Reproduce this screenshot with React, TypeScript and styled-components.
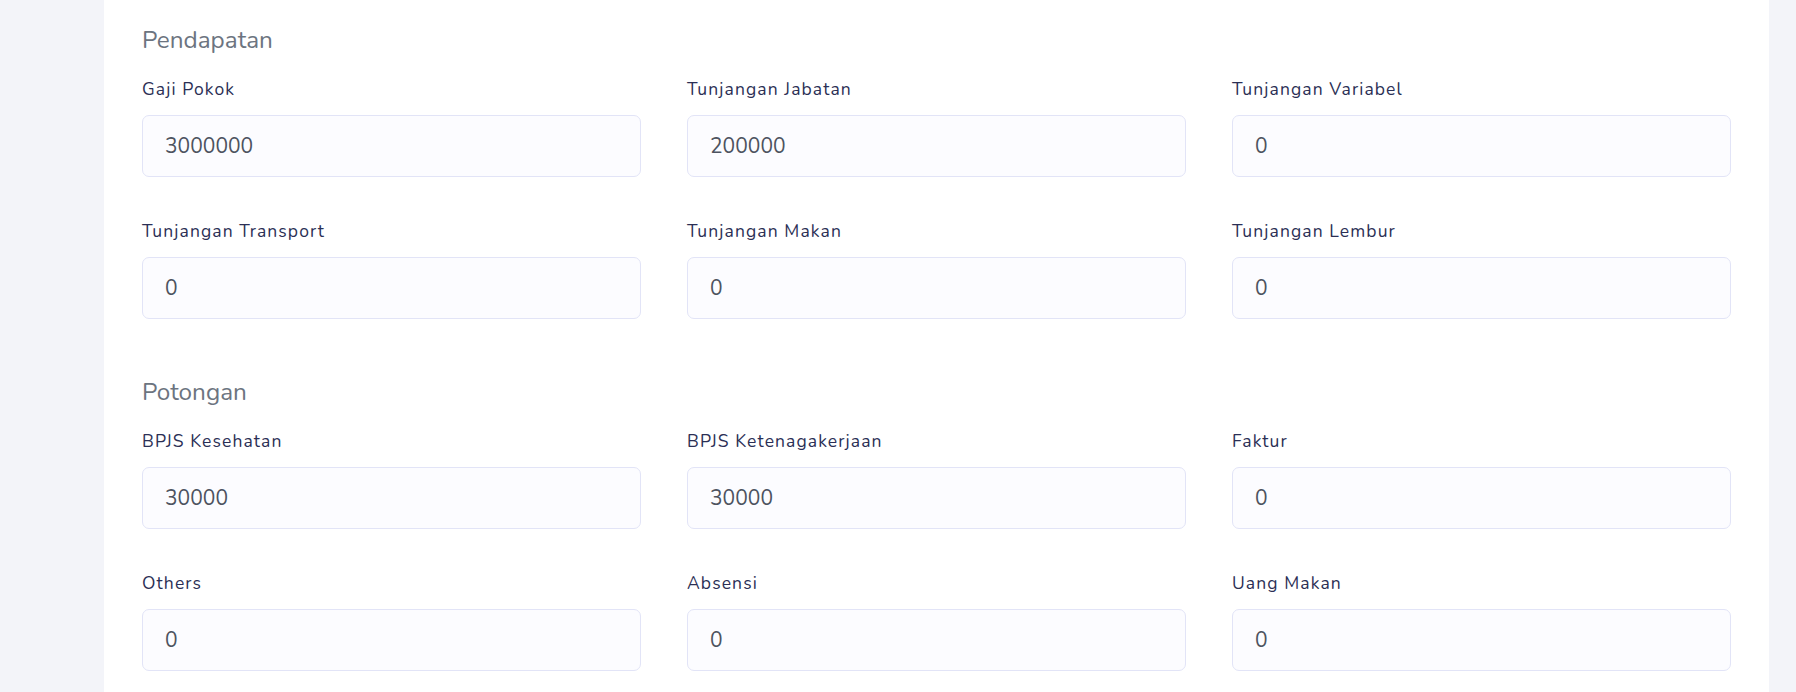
import React from "react";
import styled, { createGlobalStyle } from "styled-components";

const GlobalStyle = createGlobalStyle`
  html, body {
    margin: 0;
    padding: 0;
    background: #f3f4f9;
    font-family: "Nunito", "Open Sans", "Noto Sans", sans-serif;
  }
  * { box-sizing: border-box; }
`;

const Page = styled.div`
  display: flex;
  min-height: 692px;
  padding: 0 27px 0 104px;
  background: #f3f4f9;
`;

const Card = styled.main`
  flex: 1;
  background: #ffffff;
  padding: 26px 38px 40px 38px;
  display: flex;
  flex-direction: column;
  gap: 59px;
`;

const Section = styled.section`
  display: flex;
  flex-direction: column;
  gap: 22px;
`;

const Heading = styled.h5`
  margin: 0;
  font-size: 24.3px;
  line-height: 29px;
  font-weight: 400;
  color: #6c7480;
`;

const Grid = styled.div`
  display: grid;
  grid-template-columns: repeat(3, 1fr);
  column-gap: 46px;
  row-gap: 42px;
`;

const Field = styled.div`
  display: flex;
  flex-direction: column;
  gap: 14px;
`;

const Label = styled.label`
  font-size: 17.5px;
  line-height: 24px;
  letter-spacing: 1.1px;
  color: #2b2f55;
  font-weight: 400;
`;

const Input = styled.input`
  height: 62px;
  width: 100%;
  padding: 0 22px;
  border: 1px solid #e2e4f7;
  border-radius: 7px;
  background: #fcfcff;
  font-family: inherit;
  font-size: 21px;
  color: #4d5360;
  outline: none;
`;

type FieldDef = { label: string; value: string };

const pendapatan: FieldDef[] = [
  { label: "Gaji Pokok", value: "3000000" },
  { label: "Tunjangan Jabatan", value: "200000" },
  { label: "Tunjangan Variabel", value: "0" },
  { label: "Tunjangan Transport", value: "0" },
  { label: "Tunjangan Makan", value: "0" },
  { label: "Tunjangan Lembur", value: "0" },
];

const potongan: FieldDef[] = [
  { label: "BPJS Kesehatan", value: "30000" },
  { label: "BPJS Ketenagakerjaan", value: "30000" },
  { label: "Faktur", value: "0" },
  { label: "Others", value: "0" },
  { label: "Absensi", value: "0" },
  { label: "Uang Makan", value: "0" },
];

const FormSection = ({ title, fields }: { title: string; fields: FieldDef[] }) => (
  <Section>
    <Heading>{title}</Heading>
    <Grid>
      {fields.map((f) => (
        <Field key={f.label}>
          <Label>{f.label}</Label>
          <Input type="text" defaultValue={f.value} />
        </Field>
      ))}
    </Grid>
  </Section>
);

export default function App() {
  return (
    <>
      <GlobalStyle />
      <Page>
        <Card>
          <FormSection title="Pendapatan" fields={pendapatan} />
          <FormSection title="Potongan" fields={potongan} />
        </Card>
      </Page>
    </>
  );
}
